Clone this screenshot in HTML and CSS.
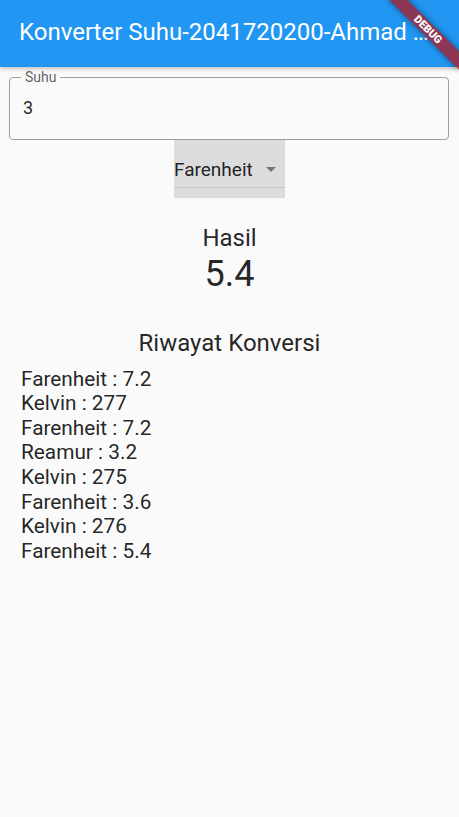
FILE: index.html
```html
<!DOCTYPE html>
<html lang="id">
<head>
<meta charset="utf-8">
<title>Konverter Suhu</title>
<link rel="stylesheet" href="styles.css">
</head>
<body>
<div class="app">
  <header class="appbar">
    <h1 class="title">Konverter Suhu-2041720200-Ahmad …</h1>
  </header>
  <main class="content">
    <fieldset class="field">
      <legend class="field-label">Suhu</legend>
      <div class="field-value">3</div>
    </fieldset>
    <div class="dropdown">
      <div class="dropdown-inner">
        <span class="dropdown-text">Farenheit</span>
        <svg class="dropdown-icon" width="24" height="24" viewBox="0 0 24 24"><path d="M7 10l5 5 5-5z" fill="#757575"/></svg>
      </div>
    </div>
    <div class="result-label">Hasil</div>
    <div class="result-value">5.4</div>
    <div class="history-title">Riwayat Konversi</div>
    <ul class="history">
      <li>Farenheit : 7.2</li>
      <li>Kelvin : 277</li>
      <li>Farenheit : 7.2</li>
      <li>Reamur : 3.2</li>
      <li>Kelvin : 275</li>
      <li>Farenheit : 3.6</li>
      <li>Kelvin : 276</li>
      <li>Farenheit : 5.4</li>
    </ul>
  </main>
  <div class="debug-banner">DEBUG</div>
</div>
</body>
</html>
```
FILE: styles.css
```css
html, body {
  margin: 0;
  padding: 0;
}
body {
  width: 459px;
  height: 817px;
  overflow: hidden;
  background: #fafafa;
  font-family: Roboto, "Noto Sans", sans-serif;
  color: rgba(0, 0, 0, 0.87);
}
.app {
  position: relative;
  width: 459px;
  height: 817px;
  overflow: hidden;
}
.appbar {
  box-sizing: border-box;
  height: 67px;
  background: #2196f3;
  box-shadow: 0 2px 4px rgba(0, 0, 0, 0.22);
  padding: 18px 0 0 19px;
  position: relative;
  z-index: 1;
}
.title {
  margin: 0;
  font-size: 24px;
  line-height: 28px;
  font-weight: 400;
  color: #ffffff;
  white-space: nowrap;
}
.content {
  display: flex;
  flex-direction: column;
  align-items: center;
}
.field {
  align-self: flex-start;
  box-sizing: border-box;
  width: 440px;
  height: 71px;
  margin: 2px 0 0 9px;
  padding: 0;
  border: 1px solid #9e9e9e;
  border-radius: 4px;
}
.field-label {
  margin-left: 11px;
  padding: 0 4px;
  font-size: 14px;
  line-height: 16px;
  color: #666666;
}
.field-value {
  font-size: 18px;
  line-height: 21px;
  padding: 11.7px 0 0 13px;
}
.dropdown {
  background: #dcdcdc;
  width: 111px;
  padding-bottom: 10px;
}
.dropdown-inner {
  height: 48px;
  box-sizing: border-box;
  border-bottom: 1px solid #c8c8c8;
  display: flex;
  align-items: flex-start;
}
.dropdown-text {
  font-size: 19px;
  line-height: 22px;
  padding-top: 18.5px;
}
.dropdown-icon {
  margin-top: 16.7px;
  margin-left: auto;
  margin-right: 2px;
}
.result-label {
  margin-top: 25.8px;
  font-size: 24px;
  line-height: 28px;
}
.result-value {
  margin-top: 1px;
  font-size: 36px;
  line-height: 42px;
}
.history-title {
  margin-top: 34px;
  font-size: 24px;
  line-height: 28px;
}
.history {
  align-self: flex-start;
  list-style: none;
  margin: 10px 0 0 21px;
  padding: 0;
  font-size: 20.8px;
  line-height: 24.57px;
}
.debug-banner {
  position: absolute;
  left: 378px;
  top: 22.5px;
  width: 100px;
  height: 13px;
  transform: rotate(45deg);
  background: rgba(170, 30, 40, 0.78);
  box-shadow: 0 0 6px rgba(0, 0, 0, 0.45);
  color: #ffffff;
  font-size: 10.8px;
  font-weight: 900;
  line-height: 13px;
  text-align: center;
  z-index: 2;
}
```
